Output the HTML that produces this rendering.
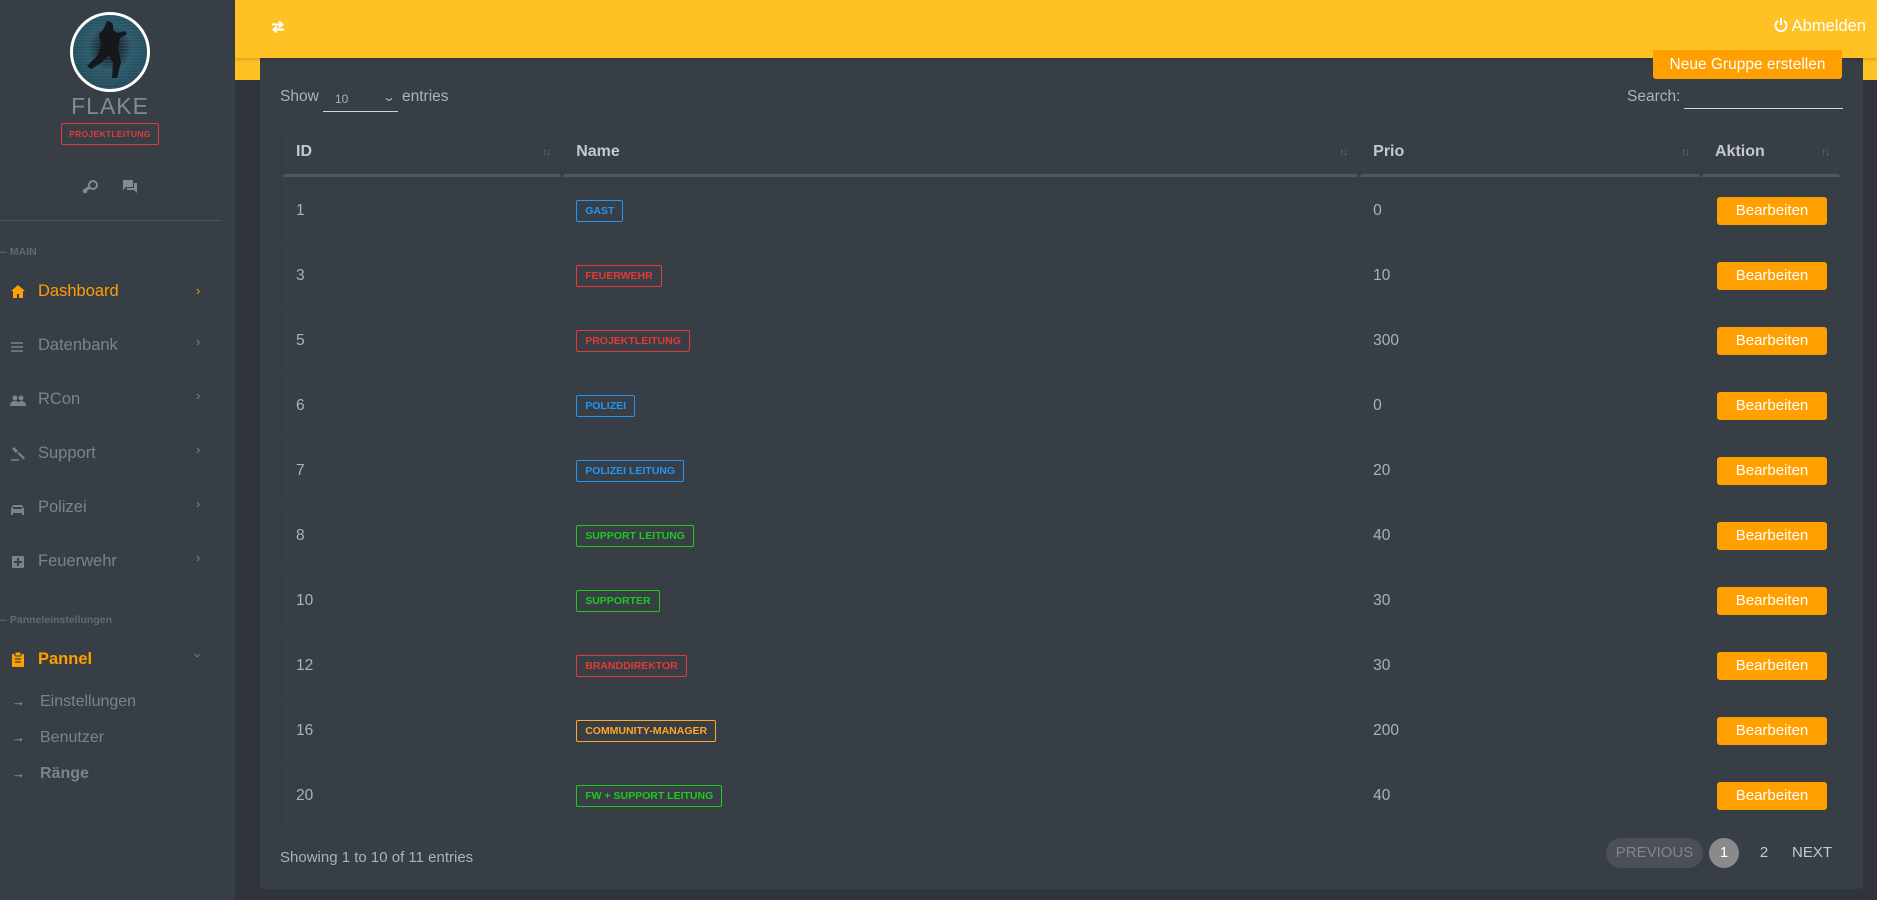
<!DOCTYPE html>
<html><head><meta charset="utf-8"><style>
*{box-sizing:border-box;margin:0;padding:0}
body{width:1877px;height:900px;background:#30353b;font-family:"Liberation Sans",sans-serif;position:relative;overflow:hidden;color:#a9b3bb}
.side{position:absolute;left:0;top:0;width:235px;height:900px;background:#383e45}
.yel{position:absolute;left:235px;top:0;width:1642px;height:80px;background:#ffc224}
.top{position:absolute;left:235px;top:0;width:1642px;height:58px;background:#ffc224;box-shadow:0 2px 3px rgba(0,0,0,.15)}
.card{position:absolute;left:260px;top:58px;width:1603px;height:831px;background:#383e45;border-radius:0 0 4px 4px}
.av{position:absolute;left:70px;top:12px;width:80px;height:80px;border-radius:50%;border:3px solid #fff;background:radial-gradient(circle at 50% 45%,#1f2a30 0 18%,#2e5a6b 40%,#1d3f4d 100%);overflow:hidden}
.flake{position:absolute;left:0;width:220px;top:93px;text-align:center;font-size:23px;color:#7e8c94;letter-spacing:1px}
.badge{position:absolute;left:61px;top:123px;width:98px;height:22px;border:1px solid #e53935;border-radius:2px;color:#e53935;font-size:8.5px;font-weight:bold;text-align:center;line-height:20px;letter-spacing:.3px}
.sep{position:absolute;left:0;top:220px;width:220px;height:1px;background:#4b5861}
.lbl{position:absolute;left:0;font-size:10.5px;font-weight:bold;color:#5d6b75}
.mi{position:absolute;left:38px;font-size:16.5px;color:#77858e}
.ic{position:absolute;left:10px}
.chev{position:absolute;left:196px;font-size:13px;color:#77858e}
.sub{position:absolute;left:40px;font-size:16px;color:#77858e}
.arr{position:absolute;left:12px;font-size:13px;color:#a0a8ae}
table{position:absolute;left:280px;top:126px;width:1563px;border-collapse:separate;border-spacing:2px;border:1px solid #313b42}
td,th{border:1px solid #323d44;text-align:left;font-size:15.5px;color:#a9b3bb;font-weight:normal;padding:0 12px;vertical-align:middle}
th{height:48px;font-weight:bold;color:#c3c9ce;font-size:16px;border-bottom:3px solid #4a5961;position:relative}
th .s{position:absolute;right:10px;top:17px;font-size:10px;color:#6c767e;letter-spacing:-1px}
td{height:63px}
.tag{display:inline-flex;align-items:center;border:1px solid;border-radius:2px;font-size:10.5px;font-weight:900;padding:0 8px;height:22px;margin-left:0}
.b{color:#2196f3}.r{color:#e53935}.g{color:#1ec91e}.o{color:#ffa726}
.btn{display:inline-block;background:#ff9f00;color:#fff;border-radius:3px;width:110px;height:28px;line-height:28px;text-align:center;font-size:15px;margin-left:2px}
</style></head><body>
<div class="side">
<div class="av"><svg width="74" height="74" viewBox="0 0 74 74"><defs><pattern id="p" width="3" height="3" patternUnits="userSpaceOnUse"><path d="M0 0H3" stroke="#3c7484" stroke-width=".6"/></pattern></defs><rect width="74" height="74" fill="url(#p)"/><path d="M34 6c5 0 7 4 6 9l4 3 8-2 2 3-7 4-2 10 3 14-4 16-5 0 1-15-4-8-8 8-10 6-4-3 10-10 4-10-2-12 4-4z" fill="#14181b"/></svg></div>
<div class="flake">FLAKE</div>
<div class="badge">PROJEKTLEITUNG</div>
<svg style="position:absolute;left:82px;top:180px" width="16" height="14" viewBox="0 0 16 14"><circle cx="11" cy="5" r="4" fill="none" stroke="#7e8c94" stroke-width="2"/><path d="M8 7L2 11" stroke="#7e8c94" stroke-width="3"/><circle cx="3" cy="11" r="2.3" fill="#7e8c94"/></svg>
<svg style="position:absolute;left:122px;top:179px" width="16" height="15" viewBox="0 0 16 15"><path d="M1 1h10v7H4l-3 3z" fill="#7e8c94"/><path d="M12 4h3v10l-3-3H5V9h7z" fill="#7e8c94"/></svg>
<div class="sep"></div>
<div class="lbl" style="top:246px">-- MAIN</div>
<div class="ic" style="top:285px;left:11px"><svg width="14" height="13" viewBox="0 0 14 13"><path d="M7 0L0 6h2v7h4V9h2v4h4V6h2z" fill="#ff9f00"/></svg></div>
<div class="mi" style="top:282px;color:#ff9f00">Dashboard</div><div class="chev" style="top:283px;color:#ff9f00">›</div>
<div class="ic" style="top:339px"><svg width="14" height="10"><path d="M1 1h12M1 5h12M1 9h12" stroke="#77858e" stroke-width="1.6"/></svg></div>
<div class="mi" style="top:336px">Datenbank</div><div class="chev" style="top:334px">›</div>
<div class="ic" style="top:393px"><svg width="16" height="11"><circle cx="5" cy="3" r="2.5" fill="#77858e"/><circle cx="11" cy="3" r="2.5" fill="#77858e"/><path d="M0 11c0-4 3-5 5-5s5 1 5 5zM8 11c0-3 1-5 3-5s5 1 5 5z" fill="#77858e"/></svg></div>
<div class="mi" style="top:390px">RCon</div><div class="chev" style="top:388px">›</div>
<div class="ic" style="top:446px"><svg width="16" height="15"><path d="M4 1l4 4-2 2-4-4zM9 6l6 6-1.5 1.5-6-6z" fill="#77858e"/><path d="M1 14h8" stroke="#77858e" stroke-width="1.5"/></svg></div>
<div class="mi" style="top:444px">Support</div><div class="chev" style="top:442px">›</div>
<div class="ic" style="top:502px"><svg width="15" height="11"><path d="M3 1h9l2 4v6h-2V9H3v2H1V5z" fill="#77858e"/><rect x="3" y="3" width="9" height="2" fill="#383e45"/></svg></div>
<div class="mi" style="top:498px">Polizei</div><div class="chev" style="top:496px">›</div>
<div class="ic" style="top:555px;left:12px"><svg width="12" height="12"><rect width="12" height="12" rx="1" fill="#77858e"/><path d="M6 2v8M2 6h8" stroke="#383e45" stroke-width="2"/></svg></div>
<div class="mi" style="top:552px">Feuerwehr</div><div class="chev" style="top:550px">›</div>
<div class="lbl" style="top:614px">-- Panneleinstellungen</div>
<div class="ic" style="top:652px;left:12px"><svg width="12" height="15"><rect y="2" width="12" height="13" rx="1" fill="#ff9f00"/><rect x="3" y="0" width="6" height="4" rx="1" fill="#ff9f00" stroke="#383e45"/><path d="M3 7h6M3 10h6" stroke="#383e45" stroke-width="1.3"/></svg></div>
<div class="mi" style="top:650px;color:#ff9f00;font-weight:bold;font-size:16.5px">Pannel</div><div class="chev" style="top:648px;transform:rotate(90deg)">›</div>
<div class="arr" style="top:694px">→</div><div class="sub" style="top:693px">Einstellungen</div>
<div class="arr" style="top:730px">→</div><div class="sub" style="top:729px">Benutzer</div>
<div class="arr" style="top:766px">→</div><div class="sub" style="top:765px;font-weight:bold">Ränge</div>
</div>
<div class="yel"></div>
<div class="card"></div>
<div class="top"></div>
<svg style="position:absolute;left:270px;top:21px" width="16" height="12" viewBox="0 0 16 12"><path d="M2 3.5h10M9 0.5l3.5 3-3.5 3" stroke="#fff" stroke-width="2" fill="none"/><path d="M14 8.5H4M7 5.5l-3.5 3 3.5 3" stroke="#fff" stroke-width="2" fill="none"/></svg>
<div style="position:absolute;left:1774px;top:17px;color:#fff;font-size:16.5px"><svg width="14" height="14" viewBox="0 0 14 14" style="vertical-align:-1px"><path d="M4 3a5.5 5.5 0 1 0 6 0" stroke="#fff" stroke-width="2" fill="none"/><path d="M7 0v7" stroke="#fff" stroke-width="2"/></svg> Abmelden</div>
<div style="position:absolute;left:1653px;top:50px;width:189px;height:29px;background:#ff9f00;border-radius:0 0 3px 3px;color:#fff;font-size:15.5px;text-align:center;line-height:30px">Neue Gruppe erstellen</div>
<div style="position:absolute;left:280px;top:88px;font-size:15.5px">Show</div>
<div style="position:absolute;left:323px;top:90px;width:75px;height:22px;border-bottom:1px solid #d0d4d7;font-size:12px;padding-left:12px;line-height:18px">10<span style="position:absolute;right:4px;top:-2px;font-size:12px;transform:scaleX(1.4)">⌄</span></div>
<div style="position:absolute;left:402px;top:88px;font-size:15.5px">entries</div>
<div style="position:absolute;left:1627px;top:88px;font-size:15.5px">Search:</div>
<div style="position:absolute;left:1684px;top:108px;width:159px;height:1px;background:#d0d4d7"></div>
<table>
<tr><th style="width:280px">ID<span class="s">↑↓</span></th><th style="width:800px">Name<span class="s">↑↓</span></th><th style="width:342px">Prio<span class="s">↑↓</span></th><th>Aktion<span class="s">↑↓</span></th></tr>
<tr><td>1</td><td><span class="tag b">GAST</span></td><td>0</td><td><span class="btn">Bearbeiten</span></td></tr>
<tr><td>3</td><td><span class="tag r">FEUERWEHR</span></td><td>10</td><td><span class="btn">Bearbeiten</span></td></tr>
<tr><td>5</td><td><span class="tag r">PROJEKTLEITUNG</span></td><td>300</td><td><span class="btn">Bearbeiten</span></td></tr>
<tr><td>6</td><td><span class="tag b">POLIZEI</span></td><td>0</td><td><span class="btn">Bearbeiten</span></td></tr>
<tr><td>7</td><td><span class="tag b">POLIZEI LEITUNG</span></td><td>20</td><td><span class="btn">Bearbeiten</span></td></tr>
<tr><td>8</td><td><span class="tag g">SUPPORT LEITUNG</span></td><td>40</td><td><span class="btn">Bearbeiten</span></td></tr>
<tr><td>10</td><td><span class="tag g">SUPPORTER</span></td><td>30</td><td><span class="btn">Bearbeiten</span></td></tr>
<tr><td>12</td><td><span class="tag r">BRANDDIREKTOR</span></td><td>30</td><td><span class="btn">Bearbeiten</span></td></tr>
<tr><td>16</td><td><span class="tag o">COMMUNITY-MANAGER</span></td><td>200</td><td><span class="btn">Bearbeiten</span></td></tr>
<tr><td>20</td><td><span class="tag g">FW + SUPPORT LEITUNG</span></td><td>40</td><td><span class="btn">Bearbeiten</span></td></tr>
</table>
<div style="position:absolute;left:280px;top:849px;font-size:15px">Showing 1 to 10 of 11 entries</div>
<div style="position:absolute;left:1606px;top:838px;width:97px;height:30px;border-radius:15px;background:#4a5056;color:#7e868c;font-size:15px;text-align:center;line-height:30px">PREVIOUS</div>
<div style="position:absolute;left:1709px;top:838px;width:30px;height:30px;border-radius:50%;background:#8a8a8a;color:#fff;font-size:15px;text-align:center;line-height:30px">1</div>
<div style="position:absolute;left:1754px;top:838px;width:20px;color:#c3c9ce;font-size:15px;text-align:center;line-height:30px">2</div>
<div style="position:absolute;left:1792px;top:838px;color:#c3c9ce;font-size:15px;line-height:30px">NEXT</div>
</body></html>
